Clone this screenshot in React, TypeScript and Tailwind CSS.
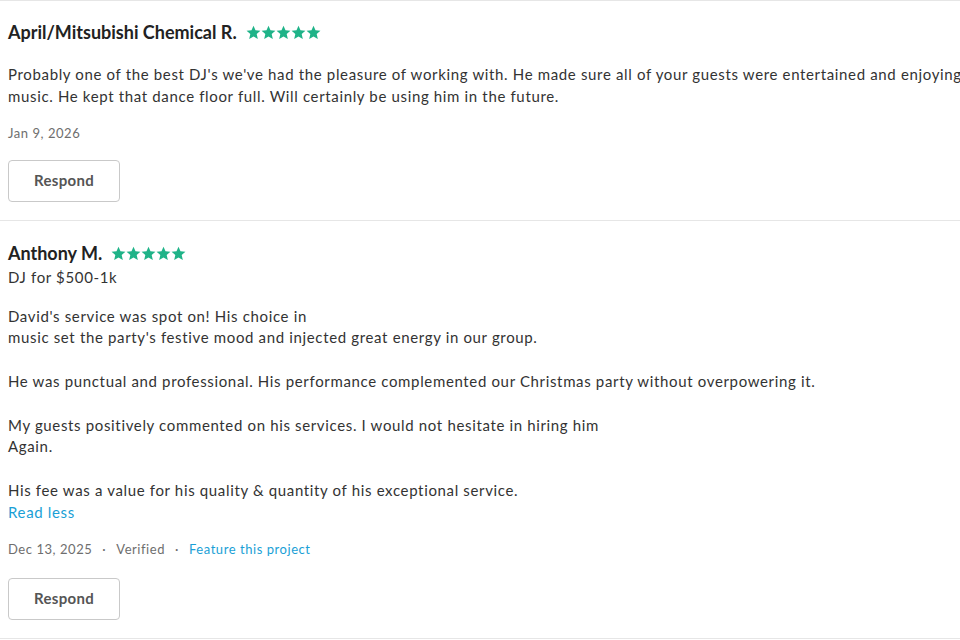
import React from "react";

const font = { fontFamily: "Lato, 'Open Sans', sans-serif" };

const Stars = () => (
  <div className="flex items-center gap-[0px] ml-[9px]">
    {[0, 1, 2, 3, 4].map((i) => (
      <svg key={i} width="15" height="15" viewBox="0 0 24 24" fill="#1fb388">
        <path d="M12 1.2l3.2 7.3 7.9.7-6 5.2 1.8 7.8L12 18.2 5.1 22.2l1.8-7.8-6-5.2 7.9-.7z" />
      </svg>
    ))}
  </div>
);

const RespondButton = () => (
  <button className="w-[112px] h-[42px] rounded-[4px] border border-[#c9c9c9] bg-white text-[15px] font-bold tracking-[0.3px] text-[#555]">
    Respond
  </button>
);

interface ReviewProps {
  name: string;
  subtitle?: string;
  lines: string[];
  readLess?: boolean;
  date: string;
  verified?: boolean;
}

const Review = ({ name, subtitle, lines, readLess, date, verified }: ReviewProps) => {
  return (
    <div className={`border-t border-[#e6e6e6] ${subtitle ? "pt-[21px]" : "pt-[19px]"} pb-[18px] pl-2`}>
      <div className="flex items-center h-[24px]">
        <h3 className="text-[18px] font-bold text-[#222]">{name}</h3>
        <Stars />
      </div>
      {subtitle && (
        <p className="text-[15px] leading-[22px] tracking-[0.65px] text-[#333]">{subtitle}</p>
      )}
      <div
        className={`${subtitle ? "mt-[18px]" : "mt-[20px]"} text-[15px] leading-[21.8px] tracking-[0.65px] text-[#333]`}
      >
        {lines.map((l, i) => (
          <p key={i} className="whitespace-nowrap h-[21.8px]">
            {l}
          </p>
        ))}
        {readLess && <p className="text-[#1a9fd6] h-[21.8px]">Read less</p>}
      </div>
      <div className="mt-[16px] flex items-center text-[13px] leading-[18px] tracking-[0.55px] text-[#6e6e6e]">
        <span>{date}</span>
        {verified && (
          <>
            <span className="mx-[10px]">·</span>
            <span>Verified</span>
            <span className="mx-[10px]">·</span>
            <span className="text-[#1a9fd6]">Feature this project</span>
          </>
        )}
      </div>
      <div className={verified ? "mt-[20px]" : "mt-[18px]"}>
        <RespondButton />
      </div>
    </div>
  );
};

export default function App() {
  return (
    <div className="w-[960px] h-[640px] overflow-hidden bg-white" style={font}>
      <div className="w-[1100px]">
        <Review
          name="April/Mitsubishi Chemical R."
          lines={[
            "Probably one of the best DJ's we've had the pleasure of working with. He made sure all of your guests were entertained and enjoying the",
            "music. He kept that dance floor full. Will certainly be using him in the future.",
          ]}
          date="Jan 9, 2026"
        />
        <Review
          name="Anthony M."
          subtitle="DJ for $500-1k"
          lines={[
            "David's service was spot on! His choice in",
            "music set the party's festive mood and injected great energy in our group.",
            "",
            "He was punctual and professional. His performance complemented our Christmas party without overpowering it.",
            "",
            "My guests positively commented on his services. I would not hesitate in hiring him",
            "Again.",
            "",
            "His fee was a value for his quality & quantity of his exceptional service.",
          ]}
          readLess
          date="Dec 13, 2025"
          verified
        />
        <div className="border-t border-[#e6e6e6]" />
      </div>
    </div>
  );
}
